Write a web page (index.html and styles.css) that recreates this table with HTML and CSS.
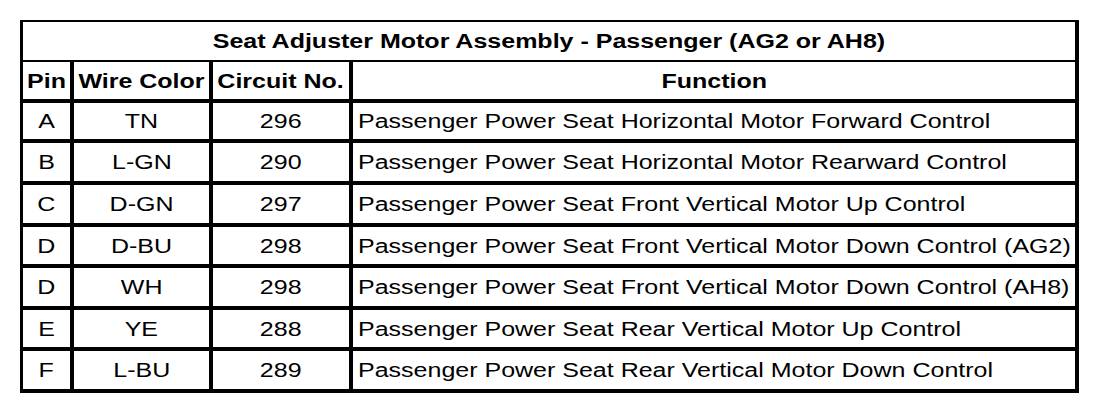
FILE: index.html
```html
<!DOCTYPE html>
<html>
<head>
<meta charset="utf-8">
<title>Seat Adjuster Motor Assembly - Passenger</title>
<link rel="stylesheet" href="styles.css">
</head>
<body>
<div class="sheet">
  <div class="cell title"><span class="t">Seat Adjuster Motor Assembly - Passenger (AG2 or AH8)</span></div>
  <div class="cell head"><span class="t">Pin</span></div>
  <div class="cell head"><span class="t">Wire Color</span></div>
  <div class="cell head"><span class="t">Circuit No.</span></div>
  <div class="cell head"><span class="t">Function</span></div>

  <div class="cell"><span class="t">A</span></div>
  <div class="cell"><span class="t">TN</span></div>
  <div class="cell"><span class="t">296</span></div>
  <div class="cell fn"><span class="t">Passenger Power Seat Horizontal Motor Forward Control</span></div>

  <div class="cell"><span class="t">B</span></div>
  <div class="cell"><span class="t">L-GN</span></div>
  <div class="cell"><span class="t">290</span></div>
  <div class="cell fn"><span class="t">Passenger Power Seat Horizontal Motor Rearward Control</span></div>

  <div class="cell"><span class="t">C</span></div>
  <div class="cell"><span class="t">D-GN</span></div>
  <div class="cell"><span class="t">297</span></div>
  <div class="cell fn"><span class="t">Passenger Power Seat Front Vertical Motor Up Control</span></div>

  <div class="cell"><span class="t">D</span></div>
  <div class="cell"><span class="t">D-BU</span></div>
  <div class="cell"><span class="t">298</span></div>
  <div class="cell fn"><span class="t">Passenger Power Seat Front Vertical Motor Down Control (AG2)</span></div>

  <div class="cell"><span class="t">D</span></div>
  <div class="cell"><span class="t">WH</span></div>
  <div class="cell"><span class="t">298</span></div>
  <div class="cell fn"><span class="t">Passenger Power Seat Front Vertical Motor Down Control (AH8)</span></div>

  <div class="cell"><span class="t">E</span></div>
  <div class="cell"><span class="t">YE</span></div>
  <div class="cell"><span class="t">288</span></div>
  <div class="cell fn"><span class="t">Passenger Power Seat Rear Vertical Motor Up Control</span></div>

  <div class="cell"><span class="t">F</span></div>
  <div class="cell"><span class="t">L-BU</span></div>
  <div class="cell"><span class="t">289</span></div>
  <div class="cell fn"><span class="t">Passenger Power Seat Rear Vertical Motor Down Control</span></div>
</div>
</body>
</html>
```

FILE: styles.css
```css
html, body {
  margin: 0;
  background: #ffffff;
}

body {
  padding: 20px 0 0 20px;
  font-family: "Liberation Sans", Arial, sans-serif;
  font-size: 20px;
  color: #000000;
}

.sheet {
  display: inline-grid;
  grid-template-columns: 47px 135px 136px 722px;
  grid-template-rows: 36px 37px 36px 38px 38px 37px 38px 37px 38px;
  gap: 4px;
  padding: 2px 4px 4px 3px;
  background: #000000;
}

.cell {
  background: #ffffff;
  display: flex;
  align-items: center;
  justify-content: center;
  overflow: visible;
  white-space: nowrap;
  line-height: 20px;
}

.cell .t {
  display: inline-block;
  transform: scaleX(1.25);
  transform-origin: center center;
}

.title {
  grid-column: 1 / -1;
  margin-bottom: -2px;
  font-weight: bold;
}

.head {
  font-weight: bold;
}

.fn {
  justify-content: flex-start;
  padding-left: 5px;
}

.fn .t {
  transform-origin: left center;
}
```
